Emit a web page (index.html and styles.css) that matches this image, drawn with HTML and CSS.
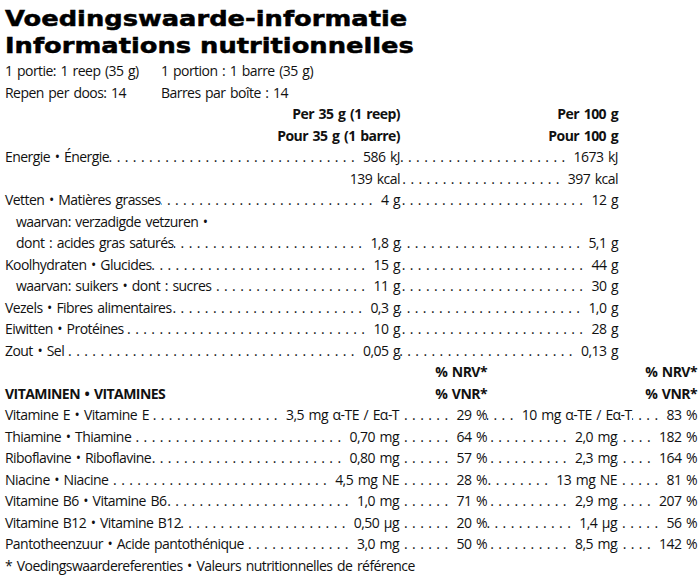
FILE: index.html
```
<!DOCTYPE html>
<html lang="nl">
<head>
<meta charset="utf-8">
<title>Voedingswaarde-informatie</title>
<link rel="stylesheet" href="styles.css">
</head>
<body>
<div class="sheet">
  <h1 class="title">Voedingswaarde-informatie<br>Informations nutritionnelles</h1>

  <div class="serving"><span class="srv-a">1 portie: 1 reep (35 g)</span><span>1 portion : 1 barre (35 g)</span></div>
  <div class="serving"><span class="srv-a">Repen per doos: 14</span><span>Barres par boîte : 14</span></div>

  <div class="row nut head"><span class="ca">Per 35 g (1 reep)</span><span class="cb">Per 100 g</span></div>
  <div class="row nut head"><span class="ca">Pour 35 g (1 barre)</span><span class="cb">Pour 100 g</span></div>

  <div class="row nut"><div class="ca"><span class="lbl">Energie • Énergie</span><span class="lead"></span><span>586 kJ</span></div><div class="cb"><span class="lead"></span><span>1673 kJ</span></div></div>
  <div class="row nut"><div class="ca"><span class="fill"></span><span>139 kcal</span></div><div class="cb"><span class="lead"></span><span>397 kcal</span></div></div>
  <div class="row nut"><div class="ca"><span class="lbl">Vetten • Matières grasses</span><span class="lead"></span><span>4 g</span></div><div class="cb"><span class="lead"></span><span>12 g</span></div></div>
  <div class="row nut"><div class="ca left"><span class="lbl sub">waarvan: verzadigde vetzuren •</span></div></div>
  <div class="row nut"><div class="ca"><span class="lbl sub">dont : acides gras saturés</span><span class="lead"></span><span>1,8 g</span></div><div class="cb"><span class="lead"></span><span>5,1 g</span></div></div>
  <div class="row nut"><div class="ca"><span class="lbl">Koolhydraten • Glucides</span><span class="lead"></span><span>15 g</span></div><div class="cb"><span class="lead"></span><span>44 g</span></div></div>
  <div class="row nut"><div class="ca"><span class="lbl sub">waarvan: suikers • dont : sucres</span><span class="lead"></span><span>11 g</span></div><div class="cb"><span class="lead"></span><span>30 g</span></div></div>
  <div class="row nut"><div class="ca"><span class="lbl">Vezels • Fibres alimentaires</span><span class="lead"></span><span>0,3 g</span></div><div class="cb"><span class="lead"></span><span>1,0 g</span></div></div>
  <div class="row nut"><div class="ca"><span class="lbl">Eiwitten • Protéines</span><span class="lead"></span><span>10 g</span></div><div class="cb"><span class="lead"></span><span>28 g</span></div></div>
  <div class="row nut"><div class="ca"><span class="lbl">Zout • Sel</span><span class="lead"></span><span>0,05 g</span></div><div class="cb"><span class="lead"></span><span>0,13 g</span></div></div>

  <div class="row vit head"><span class="va"></span><span class="vb">% NRV*</span><span class="vc"></span><span class="vd">% NRV*</span></div>
  <div class="row vit head"><span class="va left">VITAMINEN • VITAMINES</span><span class="vb">% VNR*</span><span class="vc"></span><span class="vd">% VNR*</span></div>

  <div class="row vit"><div class="va"><span class="lbl">Vitamine E • Vitamine E</span><span class="lead"></span><span>3,5 mg α-TE / Eα-T</span></div><div class="vb"><span class="lead"></span><span>29 %</span></div><div class="vcd"><span class="lead"></span><span>10 mg α-TE / Eα-T</span><span class="lead"></span><span>83 %</span></div></div>
  <div class="row vit"><div class="va"><span class="lbl">Thiamine • Thiamine</span><span class="lead"></span><span>0,70 mg</span></div><div class="vb"><span class="lead"></span><span>64 %</span></div><div class="vc"><span class="lead"></span><span>2,0 mg</span></div><div class="vd"><span class="lead"></span><span>182 %</span></div></div>
  <div class="row vit"><div class="va"><span class="lbl">Riboflavine • Riboflavine</span><span class="lead"></span><span>0,80 mg</span></div><div class="vb"><span class="lead"></span><span>57 %</span></div><div class="vc"><span class="lead"></span><span>2,3 mg</span></div><div class="vd"><span class="lead"></span><span>164 %</span></div></div>
  <div class="row vit"><div class="va"><span class="lbl">Niacine • Niacine</span><span class="lead"></span><span>4,5 mg NE</span></div><div class="vb"><span class="lead"></span><span>28 %</span></div><div class="vc"><span class="lead"></span><span>13 mg NE</span></div><div class="vd"><span class="lead"></span><span>81 %</span></div></div>
  <div class="row vit"><div class="va"><span class="lbl">Vitamine B6 • Vitamine B6</span><span class="lead"></span><span>1,0 mg</span></div><div class="vb"><span class="lead"></span><span>71 %</span></div><div class="vc"><span class="lead"></span><span>2,9 mg</span></div><div class="vd"><span class="lead"></span><span>207 %</span></div></div>
  <div class="row vit"><div class="va"><span class="lbl">Vitamine B12 • Vitamine B12</span><span class="lead"></span><span>0,50 µg</span></div><div class="vb"><span class="lead"></span><span>20 %</span></div><div class="vc"><span class="lead"></span><span>1,4 µg</span></div><div class="vd"><span class="lead"></span><span>56 %</span></div></div>
  <div class="row vit"><div class="va"><span class="lbl">Pantotheenzuur • Acide pantothénique</span><span class="lead"></span><span>3,0 mg</span></div><div class="vb"><span class="lead"></span><span>50 %</span></div><div class="vc"><span class="lead"></span><span>8,5 mg</span></div><div class="vd"><span class="lead"></span><span>142 %</span></div></div>

  <p class="foot">* Voedingswaardereferenties • Valeurs nutritionnelles de référence</p>
</div>
</body>
</html>
```

FILE: styles.css
```
html, body {
  margin: 0;
  padding: 0;
  background: #ffffff;
}

.sheet {
  padding: 0 0 0 5px;
  color: #111111;
  font-family: "Open Sans", "DejaVu Sans Condensed", sans-serif;
  font-stretch: 93%;
  font-size: 14px;
  letter-spacing: -0.55px;
  word-spacing: 1.5px;
  line-height: 21.5px;
}

.title {
  width: max-content;
  margin: 0 0 1px 0;
  padding-top: 5px;
  font-family: "DejaVu Sans", sans-serif;
  font-stretch: 100%;
  font-weight: bold;
  font-size: 22px;
  letter-spacing: 0;
  word-spacing: 0;
  line-height: 27px;
  color: #000000;
  -webkit-text-stroke: 0.5px #000000;
  transform: scaleX(1.17);
  transform-origin: 0 0;
}

.serving {
  display: flex;
  height: 21.5px;
}

.srv-a {
  width: 156px;
}

.row {
  display: flex;
  height: 21.5px;
  white-space: nowrap;
}

.head {
  font-weight: bold;
}

.ca, .cb, .va, .vb, .vc, .vd, .vcd {
  display: flex;
  justify-content: flex-end;
  align-items: baseline;
}

.ca { width: 395px; }
.cb { width: 218px; }

.va { width: 394px; }
.vb { width: 88px; }
.vc { width: 130px; }
.vd { width: 80px; }
.vcd { width: 210px; }

.left { justify-content: flex-start; }

.lbl {
  flex: 0 0 auto;
}

.sub {
  padding-left: 11px;
}

.fill {
  flex: 1 1 0;
}

.lead {
  flex: 1 1 0;
  min-width: 0;
  overflow: hidden;
  direction: rtl;
  padding: 0 4px 0 1px;
}

.lead::before {
  content: "................................................................................................................................................................";
  letter-spacing: 4.4px;
  word-spacing: 0;
}

.foot {
  margin: 0;
}
```
